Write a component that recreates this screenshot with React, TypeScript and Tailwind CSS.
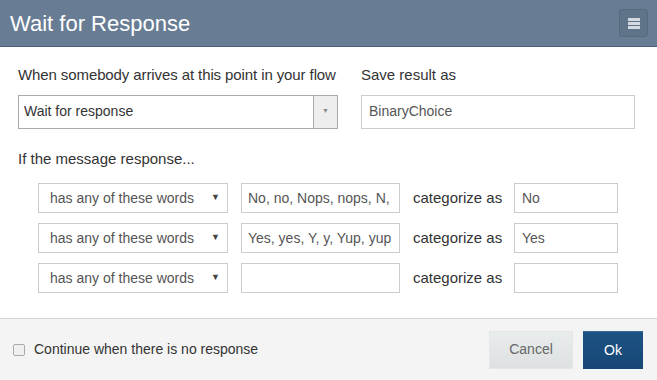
type Rule = { test: string; words: string; category: string };

const rules: Rule[] = [
  { test: "has any of these words", words: "No, no, Nops, nops, N, n", category: "No" },
  { test: "has any of these words", words: "Yes, yes, Y, y, Yup, yup", category: "Yes" },
  { test: "has any of these words", words: "", category: "" },
];

function RuleRow({ rule }: { rule: Rule }) {
  return (
    <div className="flex items-center">
      <div className="ml-[20px] flex h-[30px] w-[190px] items-center justify-between border border-[#cccccc] bg-white pl-[11px] pr-[7px] text-[14px] text-[#555555]">
        <span>{rule.test}</span>
        <span className="text-[9px] text-[#444444]">▼</span>
      </div>
      <div className="ml-[13px] flex h-[30px] w-[159px] items-center border border-[#cccccc] bg-white px-[6px] text-[14px] text-[#555555]">
        <div className="overflow-hidden whitespace-nowrap">{rule.words}</div>
      </div>
      <span className="ml-[13px] w-[101px] text-[15px] text-[#333333]">categorize as</span>
      <div className="flex h-[30px] w-[104px] items-center border border-[#cccccc] bg-white pl-[7px] text-[14px] text-[#555555]">
        {rule.category}
      </div>
    </div>
  );
}

export default function App() {
  return (
    <div className="flex h-[380px] w-[657px] flex-col overflow-hidden bg-white font-['Liberation_Sans',Arial,sans-serif]">
      {/* Header */}
      <div className="flex h-[47px] items-center justify-between border-b border-[#4d6278] bg-[#687d93] pl-[10px] pr-[9px]">
        <h1 className="text-[22px] text-white">Wait for Response</h1>
        <button className="flex h-[28px] w-[29px] items-center justify-center rounded-[3px] border border-[#56697e] bg-[#5f7389]">
          <span className="flex flex-col gap-[1px]">
            <span className="block h-[3px] w-[12px] bg-[#d3dae2]" />
            <span className="block h-[3px] w-[12px] bg-[#d3dae2]" />
            <span className="block h-[3px] w-[12px] bg-[#d3dae2]" />
          </span>
        </button>
      </div>

      {/* Body */}
      <div className="flex-1 px-[18px] pt-[17px]">
        <div className="flex">
          <div className="w-[320px]">
            <div className="whitespace-nowrap text-[15px] tracking-[-0.1px] text-[#333333]">
              When somebody arrives at this point in your flow
            </div>
            <div className="mt-[8px] flex h-[34px] items-stretch border border-[#aaaaaa] bg-white">
              <span className="flex flex-1 items-center pl-[5px] text-[14px] text-[#333333]">Wait for response</span>
              <span className="flex w-[24px] items-center justify-center border-l border-[#aaaaaa] bg-[#eeeeee] text-[7px] text-[#888888]">
                ▼
              </span>
            </div>
          </div>
          <div className="ml-[23px] w-[274px]">
            <div className="text-[15px] text-[#333333]">Save result as</div>
            <div className="mt-[8px] flex h-[34px] items-center border border-[#cccccc] bg-white pl-[7px] text-[14px] text-[#555555]">
              BinaryChoice
            </div>
          </div>
        </div>

        <div className="mt-[19px] text-[15px] text-[#333333]">If the message response...</div>

        <div className="mt-[13px] flex flex-col gap-[10px]">
          {rules.map((r, i) => (
            <RuleRow key={i} rule={r} />
          ))}
        </div>
      </div>

      {/* Footer */}
      <div className="flex h-[62px] items-center justify-between border-t border-[#d6d6d6] bg-[#f4f4f4] pl-[13px] pr-[14px]">
        <label className="flex items-center text-[14px] text-[#333333]">
          <span className="block h-[12px] w-[12px] rounded-[2px] border border-[#a9a9a9] bg-[#f0f0f0]" />
          <span className="ml-[9px]">Continue when there is no response</span>
        </label>
        <div className="flex gap-[10px]">
          <button className="h-[38px] w-[84px] border border-[#e4e6e7] bg-gradient-to-b from-[#e9ecec] to-[#dde1e1] text-[14px] text-[#666666]">
            Cancel
          </button>
          <button className="h-[38px] w-[60px] border-t border-[#3a6a96] bg-gradient-to-b from-[#1d5285] to-[#174774] text-[14px] text-white">
            Ok
          </button>
        </div>
      </div>
    </div>
  );
}
